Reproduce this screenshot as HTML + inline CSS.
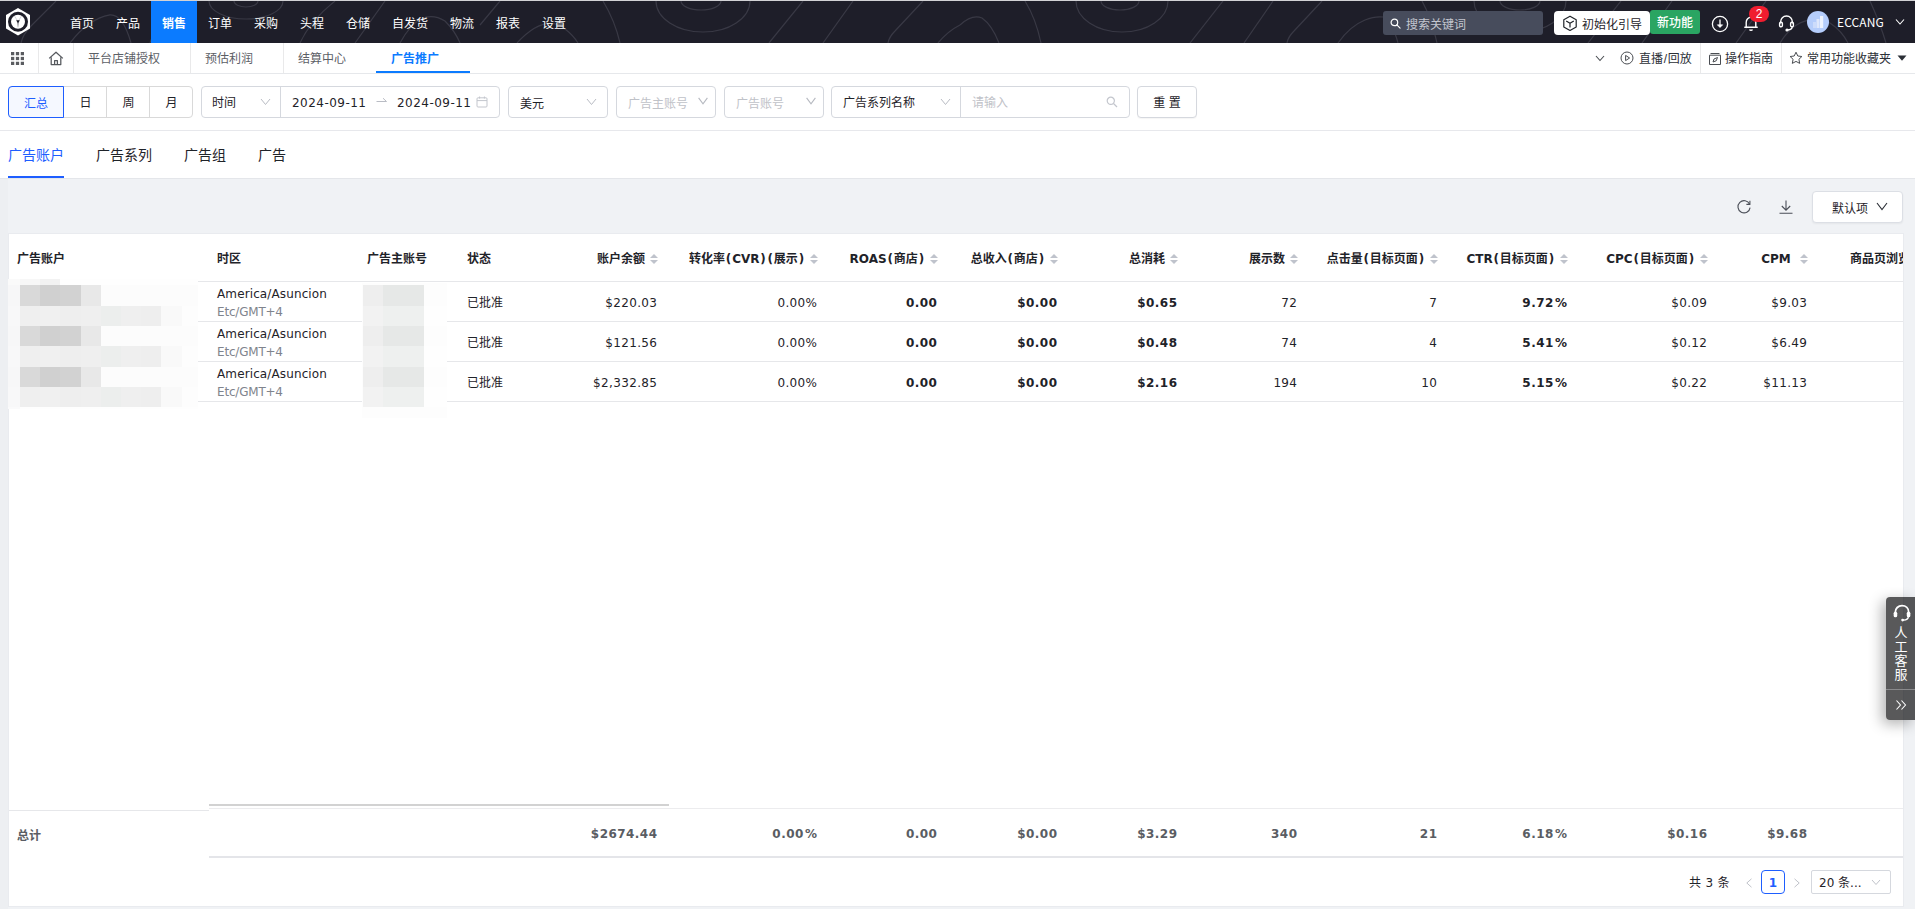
<!DOCTYPE html>
<html lang="zh-CN">
<head>
<meta charset="utf-8">
<title>广告推广</title>
<style>
*{box-sizing:border-box;margin:0;padding:0}
html,body{width:1915px;height:909px;overflow:hidden}
body{position:relative;background:#f0f2f5;font-family:"DejaVu Sans","Noto Sans CJK SC",sans-serif;font-size:12px;color:#1f2329;line-height:1}
.abs{position:absolute}
.cj{font-family:"Liberation Sans","Noto Sans CJK SC",sans-serif}
/* nav */
#nav{position:absolute;left:0;top:0;width:1915px;height:43px;background:#1e1e29;border-top:1px solid #d2d2d5;overflow:hidden}
#nav .item{position:absolute;top:0;height:42px;width:46px;text-align:center;color:#fff;font-size:12px;line-height:46px;font-family:"Liberation Sans","Noto Sans CJK SC",sans-serif;font-weight:400}
#nav .item.on{background:#0b7bff;font-weight:700}
/* tab bar */
#tabs{position:absolute;left:0;top:43px;width:1915px;height:31px;background:#fff;border-bottom:1px solid #e6e8eb}
#tabs .sep{position:absolute;top:0;width:1px;height:30px;background:#e9e9ea}
#tabs .t{position:absolute;top:0;height:30px;line-height:33px;font-size:12px;color:#5c6066;font-family:"Liberation Sans","Noto Sans CJK SC",sans-serif}
#tabs .t.on{color:#0b7bff;font-weight:700}
#tabs .r{position:absolute;top:0;height:30px;line-height:33px;font-size:12px;color:#2b2f36;font-family:"Liberation Sans","Noto Sans CJK SC",sans-serif}
/* filter */
#filter{position:absolute;left:0;top:74px;width:1915px;height:57px;background:#fff;border-bottom:1px solid #e7e8ec}
.box{position:absolute;top:12px;height:32px;border:1px solid #d5d8de;border-radius:4px;background:#fff;line-height:34px;font-size:12px;color:#1f2329}
.ph{color:#bfc2c8}
/* subtabs */
#sub{position:absolute;left:0;top:131px;width:1915px;height:48px;background:#fff;border-bottom:1px solid #e4e6ea}
#sub .s{position:absolute;top:0;height:47px;line-height:48px;font-size:14px;color:#1f2329;font-family:"Liberation Sans","Noto Sans CJK SC",sans-serif}
#sub .s.on{color:#1e5eff}
/* card */
#card{position:absolute;left:9px;top:234px;width:1894px;height:672px;background:#fff;overflow:hidden;box-shadow:0 0 0 1px #e9ebef}
.th{position:absolute;top:0;height:47px;line-height:50px;font-weight:700;font-size:12px;color:#1f2329;white-space:nowrap}
.thr{text-align:right}
.sort{display:inline-block;width:8px;height:10px;margin-left:5px;vertical-align:-1px;position:relative}
.sort:before{content:"";position:absolute;left:0;top:0;border:4px solid transparent;border-top:0;border-bottom:4.5px solid #bfc3cc}
.sort:after{content:"";position:absolute;left:0;bottom:0;border:4px solid transparent;border-bottom:0;border-top:4.5px solid #bfc3cc}
.hl{position:absolute;height:1px;background:#e6e7ea}
.td{position:absolute;height:39px;line-height:42px;font-size:12px;color:#1f2329;white-space:nowrap;text-align:right;letter-spacing:.36px;margin-right:-.36px}
.p{margin:0 .85px}
.pc{margin-left:1.2px}
.b{font-weight:700;letter-spacing:.45px;margin-right:-.45px}
.sum{position:absolute;height:40px;line-height:42px;font-size:12px;font-weight:700;color:#5a5d63;text-align:right;white-space:nowrap;letter-spacing:.45px;margin-right:-.45px}
</style>
</head>
<body>

<!-- ============ NAV ============ -->
<div id="nav">
<svg class="abs" style="left:0;top:0" width="1915" height="42" viewBox="0 0 1915 42" fill="none" stroke="#393945" stroke-width="1.2">
<path d="M56 0 L31 25 Q23 33 21 42"/>
<path d="M70 42 Q88 18 110 13.8 Q123 13 131 42"/>
<path d="M209 0 A37 18 0 0 0 283 0"/>
<path d="M234 0 A12 6 0 0 0 258 0"/>
<path d="M300 42 Q310 20 335 0"/>
<path d="M355 42 L385 0"/>
<path d="M150 42 Q160 10 185 0"/>
<path d="M400 42 Q420 5 445 20 Q455 30 460 42"/>
<path d="M480 24 L500 0"/>
<path d="M517 42 Q545 12 565 28 Q573 34 578 42"/>
<path d="M603 0 Q615 20 620 42"/>
<path d="M656 0 A47 31 0 0 0 750 0"/>
<path d="M681 0 A20 9 0 0 0 721 0"/>
<path d="M769 42 L803 0"/>
<path d="M823 42 L853 0"/>
<path d="M888 42 Q889 36 895 30 L923 0"/>
<path d="M938 42 Q948 30 960 24"/>
<path d="M960 24 Q972 13 982 17 Q992 24 999 42"/>
<path d="M1025 0 Q1036 18 1041 42"/>
<path d="M1076 0 A46 31 0 0 0 1168 0"/>
<path d="M1101 0 A19 9 0 0 0 1139 0"/>
<path d="M1190 42 L1223 0"/>
<path d="M1244 42 L1273 0"/>
<path d="M1287 42 Q1288 36 1294 30 L1322 0"/>
<path d="M1338 42 Q1350 25 1365 19 Q1375 15 1383 16"/>
<path d="M1383 16 Q1392 20 1398 42"/>
<path d="M1422 0 Q1432 18 1437 42"/>
<path d="M1474 0 A46 31 0 0 0 1566 0"/>
<path d="M1500 0 A20 9 0 0 0 1540 0"/>
<path d="M1588 42 L1621 0"/>
<path d="M1642 42 L1672 0"/>
<path d="M1736 42 L1766 0"/>
<path d="M1780 42 Q1800 10 1830 22 Q1842 30 1848 42"/>
<path d="M1870 0 Q1880 22 1886 42"/>
</svg>
<!-- logo -->
<svg class="abs" style="left:5px;top:6px" width="26" height="29" viewBox="5 7 26 29">
<path d="M18 8 L30 14.9 V28.6 L18 35.4 L6 28.6 V14.9 Z" fill="#fff"/>
<circle cx="18" cy="21.8" r="10" fill="#1e1e29"/>
<circle cx="18" cy="21.8" r="7" fill="#fff"/>
<path d="M18 21.6 L14.6 16.2 M18 21.6 L21.4 16.2" stroke="#d4d4d8" stroke-width="1" fill="none"/>
<path d="M16.2 20.3 L19.8 20.3 L18.4 23 L18.1 27.4 L17.9 27.4 L17.6 23 Z" fill="#1e1e29"/>
</svg>
<div class="item" style="left:59px">首页</div>
<div class="item" style="left:105px">产品</div>
<div class="item on" style="left:151px">销售</div>
<div class="item" style="left:197px">订单</div>
<div class="item" style="left:243px">采购</div>
<div class="item" style="left:289px">头程</div>
<div class="item" style="left:335px">仓储</div>
<div class="item" style="left:381px;width:58px">自发货</div>
<div class="item" style="left:439px">物流</div>
<div class="item" style="left:485px">报表</div>
<div class="item" style="left:531px">设置</div>
<!-- search -->
<div class="abs" style="left:1383px;top:10px;width:160px;height:24px;background:#474c5c;border-radius:3px"></div>
<svg class="abs" style="left:1390px;top:17px" width="11" height="11" viewBox="0 0 12 12" fill="none" stroke="#fff" stroke-width="1.3"><circle cx="4.8" cy="4.8" r="3.6"/><path d="M7.5 7.5 L11 11" stroke-linecap="round"/></svg>
<div class="abs cj" style="left:1406px;top:10px;height:24px;line-height:28px;color:#c3c6cf;font-size:12px">搜索关键词</div>
<!-- guide -->
<div class="abs" style="left:1554px;top:10px;width:96px;height:24px;background:#fff;border-radius:4px"></div>
<svg class="abs" style="left:1562px;top:14px" width="16" height="17" viewBox="0 0 16 17" fill="none" stroke="#1f2329" stroke-width="1.2" stroke-linejoin="round"><path d="M8 1.2 L14.2 4.7 V11.9 L8 15.4 L1.8 11.9 V4.7 Z"/><path d="M4.2 6 L8 8.3 L11.8 6 M8 8.3 V12.6"/></svg>
<div class="abs cj" style="left:1582px;top:10px;height:24px;line-height:28px;color:#1f2329;font-size:12px">初始化引导</div>
<div class="abs cj" style="left:1650px;top:9px;width:50px;height:24px;line-height:27px;background:#2aa562;border-radius:3px;color:#fff;font-size:12px;font-weight:500;text-align:center">新功能</div>
<!-- download -->
<svg class="abs" style="left:1711px;top:14px" width="18" height="18" viewBox="0 0 18 18" fill="none" stroke="#fff" stroke-width="1.3"><circle cx="9" cy="9" r="7.6"/><path d="M9 4.5 V12"/><path d="M6.3 9.8 L9 12.6 L11.7 9.8 Z" fill="#fff" stroke-width=".6"/></svg>
<!-- bell -->
<svg class="abs" style="left:1743px;top:14px" width="16" height="17" viewBox="0 0 16 17" fill="none" stroke="#fff" stroke-width="1.4" stroke-linejoin="round"><path d="M3.2 12.2 V7.4 C3.2 4.4 5.3 2.3 8 2.3 C10.7 2.3 12.8 4.4 12.8 7.4 V12.2 H14.2 H1.8 Z"/><path d="M6.6 14.5 C7 15.6 9 15.6 9.4 14.5"/></svg>
<div class="abs" style="left:1749px;top:5px;width:20px;height:16px;border-radius:8px;background:#f01d2f;color:#fff;font-size:12px;line-height:16px;text-align:center;font-family:'Liberation Sans',sans-serif">2</div>
<!-- headset -->
<svg class="abs" style="left:1778px;top:13px" width="17" height="18" viewBox="0 0 17 18" fill="none" stroke="#fff" stroke-width="1.4"><path d="M2.6 9.5 V8 C2.6 4.4 5.2 2 8.5 2 C11.8 2 14.4 4.4 14.4 8 V9.5"/><rect x="1.6" y="8.2" width="2.8" height="4.6" rx="1.3"/><rect x="12.6" y="8.2" width="2.8" height="4.6" rx="1.3"/><path d="M14.2 12.6 C14.2 15 12 16 9.6 16"/><circle cx="9" cy="16" r=".9" fill="#fff"/></svg>
<!-- avatar -->
<div class="abs" style="left:1807px;top:10px;width:22px;height:22px;border-radius:11px;background:#b5cdfb"></div>
<svg class="abs" style="left:1807px;top:10px" width="22" height="22" viewBox="0 0 22 22"><rect x="6" y="11" width="3" height="6" fill="#cddcfb"/><rect x="9.5" y="8" width="3" height="9" fill="#dfe8fc"/><rect x="13" y="5" width="3.2" height="12" fill="#eef3fd"/></svg>
<div class="abs" style="left:1837px;top:10px;height:24px;line-height:22px;color:#fff;font-size:12px;letter-spacing:.1px;font-family:'Noto Sans CJK SC','Liberation Sans',sans-serif">ECCANG</div>
<svg class="abs" style="left:1895px;top:17px" width="10" height="8" viewBox="0 0 10 8" fill="none" stroke="#fff" stroke-width="1.1"><path d="M1 1.5 L5 6 L9 1.5"/></svg>
</div>

<!-- ============ TAB BAR ============ -->
<div id="tabs">
<svg class="abs" style="left:10.5px;top:8.5px" width="13" height="13" viewBox="0 0 12 12" fill="#5a5c60"><rect x="0" y="0" width="3" height="3"/><rect x="4.5" y="0" width="3" height="3"/><rect x="9" y="0" width="3" height="3"/><rect x="0" y="4.5" width="3" height="3"/><rect x="4.5" y="4.5" width="3" height="3"/><rect x="9" y="4.5" width="3" height="3"/><rect x="0" y="9" width="3" height="3"/><rect x="4.5" y="9" width="3" height="3"/><rect x="9" y="9" width="3" height="3"/></svg>
<div class="sep" style="left:38px"></div>
<svg class="abs" style="left:48px;top:8px" width="16" height="15" viewBox="0 0 16 15" fill="none" stroke="#55585d" stroke-width="1.25" stroke-linejoin="round"><path d="M1.2 7.4 L8 1.2 L14.8 7.4"/><path d="M3.2 6.2 V13.6 H12.8 V6.2"/><path d="M6.6 13.6 V9.6 H9.4 V13.6"/></svg>
<div class="sep" style="left:73px"></div>
<div class="t" style="left:88px">平台店铺授权</div>
<div class="sep" style="left:190px"></div>
<div class="t" style="left:205px">预估利润</div>
<div class="sep" style="left:283px"></div>
<div class="t" style="left:298px">结算中心</div>
<div class="t on" style="left:391px">广告推广</div>
<div class="abs" style="left:376px;top:28px;width:94px;height:2px;background:#0b7bff"></div>
<svg class="abs" style="left:1595px;top:12px" width="10" height="7" viewBox="0 0 10 7" fill="none" stroke="#4a4d52" stroke-width="1.1"><path d="M1 1 L5 5.5 L9 1"/></svg>
<svg class="abs" style="left:1620px;top:8px" width="14" height="14" viewBox="0 0 14 14" fill="none" stroke="#4a4d52" stroke-width="1"><circle cx="7" cy="7" r="6"/><path d="M5.6 4.4 L9.6 7 L5.6 9.6 Z" stroke-linejoin="round"/></svg>
<div class="r" style="left:1639px">直播<span style="margin:0 .7px">/</span>回放</div>
<div class="sep" style="left:1700px"></div>
<svg class="abs" style="left:1708px;top:9px" width="14" height="14" viewBox="0 0 14 14" fill="none" stroke="#4a4d52" stroke-width="1"><path d="M1.5 3.2 H12.5 V12.5 H1.5 Z M2.5 1.5 H11.5"/><path d="M5 10 L6 7 L9.5 5.5 L8.2 8.8 Z"/></svg>
<div class="r" style="left:1725px">操作指南</div>
<div class="sep" style="left:1781px"></div>
<svg class="abs" style="left:1789px;top:8px" width="14" height="14" viewBox="0 0 14 14" fill="none" stroke="#4a4d52" stroke-width="1" stroke-linejoin="round"><path d="M7 1.2 L8.8 5 L12.9 5.5 L9.9 8.3 L10.7 12.4 L7 10.4 L3.3 12.4 L4.1 8.3 L1.1 5.5 L5.2 5 Z"/></svg>
<div class="r" style="left:1807px">常用功能收藏夹</div>
<svg class="abs" style="left:1897px;top:12px" width="10" height="6" viewBox="0 0 10 6" fill="#2b2f36"><path d="M0.5 0.5 H9.5 L5 5.8 Z"/></svg>
</div>

<!-- FILTER -->
<div id="filter">
<!-- segmented -->
<div class="box" style="left:8px;width:185px;border-color:#d9d9d9"></div>
<div class="abs" style="left:106px;top:13px;width:1px;height:30px;background:#d9d9d9"></div>
<div class="abs" style="left:149px;top:13px;width:1px;height:30px;background:#d9d9d9"></div>
<div class="abs cj" style="left:8px;top:12px;width:56px;height:32px;border:1px solid #1e5eff;border-radius:4px 0 0 4px;background:#f5f8ff;color:#1e5eff;line-height:35px;text-align:center;font-size:12px">汇总</div>
<div class="abs cj" style="left:64px;top:12px;width:43px;height:32px;line-height:35px;text-align:center">日</div>
<div class="abs cj" style="left:107px;top:12px;width:43px;height:32px;line-height:35px;text-align:center">周</div>
<div class="abs cj" style="left:150px;top:12px;width:43px;height:32px;line-height:35px;text-align:center">月</div>
<!-- time + range -->
<div class="box" style="left:201px;width:299px"></div>
<div class="abs" style="left:280px;top:13px;width:1px;height:30px;background:#d5d8de"></div>
<div class="abs cj" style="left:212px;top:12px;height:32px;line-height:35px">时间</div>
<svg class="abs" style="left:260px;top:24px" width="11" height="8" viewBox="0 0 11 8" fill="none" stroke="#b9bcc4" stroke-width="1"><path d="M1 1 L5.5 6.5 L10 1"/></svg>
<div class="abs" style="left:292px;top:12px;height:32px;line-height:34px;letter-spacing:.47px">2024-09-11</div>
<svg class="abs" style="left:376px;top:23px" width="12" height="6" viewBox="0 0 12 6" fill="none" stroke="#b9bcc4" stroke-width="1"><path d="M0.5 4.5 H10.5 L7 1.2"/></svg>
<div class="abs" style="left:397px;top:12px;height:32px;line-height:34px;letter-spacing:.47px">2024-09-11</div>
<svg class="abs" style="left:476px;top:22px" width="12" height="12" viewBox="0 0 12 12" fill="none" stroke="#c3c6cd" stroke-width="1"><rect x="1" y="1.8" width="10" height="9.2" rx="1"/><path d="M1 4.6 H11 M3.6 0.5 V2.6 M8.4 0.5 V2.6"/></svg>
<!-- currency -->
<div class="box cj" style="left:508px;width:100px;padding-left:11px">美元</div>
<svg class="abs" style="left:586px;top:24px" width="11" height="8" viewBox="0 0 11 8" fill="none" stroke="#b9bcc4" stroke-width="1"><path d="M1 1 L5.5 6.5 L10 1"/></svg>
<div class="box cj ph" style="left:616px;width:100px;padding-left:11px">广告主账号</div>
<svg class="abs" style="left:698px;top:23px" width="10" height="8" viewBox="0 0 10 8" fill="none" stroke="#b6b9c0" stroke-width="1.1"><path d="M0.6 0.8 L5 6.8 L9.4 0.8"/></svg>
<div class="box cj ph" style="left:724px;width:100px;padding-left:11px">广告账号</div>
<svg class="abs" style="left:806px;top:23px" width="10" height="8" viewBox="0 0 10 8" fill="none" stroke="#b6b9c0" stroke-width="1.1"><path d="M0.6 0.8 L5 6.8 L9.4 0.8"/></svg>
<div class="box" style="left:831px;width:299px"></div>
<div class="abs" style="left:960px;top:13px;width:1px;height:30px;background:#d5d8de"></div>
<div class="abs cj" style="left:843px;top:12px;height:32px;line-height:35px">广告系列名称</div>
<svg class="abs" style="left:940px;top:24px" width="11" height="8" viewBox="0 0 11 8" fill="none" stroke="#b9bcc4" stroke-width="1"><path d="M1 1 L5.5 6.5 L10 1"/></svg>
<div class="abs cj ph" style="left:972px;top:12px;height:32px;line-height:35px">请输入</div>
<svg class="abs" style="left:1106px;top:22px" width="12" height="12" viewBox="0 0 12 12" fill="none" stroke="#c3c6cd" stroke-width="1.2"><circle cx="4.8" cy="4.8" r="3.6"/><path d="M7.5 7.5 L11 11"/></svg>
<div class="box cj" style="left:1137px;width:60px;text-align:center;line-height:32px;box-shadow:0 1px 1px rgba(0,0,0,.04)">重 置</div>
</div>
<!-- SUBTABS -->
<div id="sub">
<div class="s on" style="left:8px">广告账户</div>
<div class="s" style="left:96px">广告系列</div>
<div class="s" style="left:184px">广告组</div>
<div class="s" style="left:258px">广告</div>
<div class="abs" style="left:8px;top:45px;width:56px;height:2px;background:#1e5eff"></div>
</div>
<div class="abs" style="left:0;top:179px;width:8px;height:730px;background:#edeff2"></div>
<!-- TOOLBAR -->
<div id="tool">
<svg class="abs" style="left:1736px;top:199px" width="16" height="16" viewBox="0 0 16 16" fill="none" stroke="#4a4e57" stroke-width="1.1"><path d="M13.6 5.2 A6.1 6.1 0 1 0 14.1 8.6"/><path d="M13.9 1.8 V5.4 H10.4" stroke-linejoin="round"/></svg>
<svg class="abs" style="left:1778px;top:199px" width="16" height="16" viewBox="0 0 16 16" fill="none" stroke="#4a4e57" stroke-width="1.1"><path d="M8 1.5 V11 M3.8 7 L8 11.2 L12.2 7 M1.5 14.3 H14.5"/></svg>
<div class="abs cj" style="left:1812px;top:191px;width:91px;height:32px;border:1px solid #dcdfe5;border-radius:4px;background:#fff;line-height:34px;padding-left:19px;box-shadow:0 1px 2px rgba(0,0,0,.05)">默认项</div>
<svg class="abs" style="left:1876px;top:202px" width="12" height="9" viewBox="0 0 12 9" fill="none" stroke="#2b2f36" stroke-width="1.1"><path d="M1 1 L6 7.5 L11 1"/></svg>
</div>
<!-- CARD -->
<div id="card">
<div class="th" style="left:8px">广告账户</div>
<div class="th" style="left:208px">时区</div>
<div class="th" style="left:358px">广告主账号</div>
<div class="th" style="left:458px">状态</div>
<div class="th thr" style="right:1245px">账户余额<span class="sort"></span></div>
<div class="th thr" style="right:1085px">转化率<span class="p">(</span>CVR<span class="p">)</span><span class="p">(</span>展示<span class="p">)</span><span class="sort"></span></div>
<div class="th thr" style="right:965px">ROAS<span class="p">(</span>商店<span class="p">)</span><span class="sort"></span></div>
<div class="th thr" style="right:845px">总收入<span class="p">(</span>商店<span class="p">)</span><span class="sort"></span></div>
<div class="th thr" style="right:725px">总消耗<span class="sort"></span></div>
<div class="th thr" style="right:605px">展示数<span class="sort"></span></div>
<div class="th thr" style="right:465px">点击量<span class="p">(</span>目标页面<span class="p">)</span><span class="sort"></span></div>
<div class="th thr" style="right:335px">CTR<span class="p">(</span>目标页面<span class="p">)</span><span class="sort"></span></div>
<div class="th thr" style="right:195px">CPC<span class="p">(</span>目标页面<span class="p">)</span><span class="sort"></span></div>
<div class="th thr" style="right:95px">CPM&nbsp;<span class="sort"></span></div>
<div class="th" style="left:1841px">商品页浏览</div>
<div class="hl" style="left:0;top:47px;width:1894px"></div>
<div class="hl" style="left:0;top:87px;width:1894px"></div>
<div class="abs" style="left:208px;top:52px;line-height:16px;font-size:12px;color:#1f2329;white-space:nowrap;letter-spacing:.12px">America/Asuncion</div>
<div class="abs" style="left:208px;top:70px;line-height:16px;font-size:12px;color:#80848d;white-space:nowrap;letter-spacing:-.2px">Etc/GMT+4</div>
<div class="td cj" style="letter-spacing:0;left:458px;top:48px;text-align:left">已批准</div>
<div class="td" style="right:1246px;top:48px">$220.03</div>
<div class="td" style="right:1086px;top:48px">0.00%</div>
<div class="td b" style="right:966px;top:48px">0.00</div>
<div class="td b" style="right:846px;top:48px">$0.00</div>
<div class="td b" style="right:726px;top:48px">$0.65</div>
<div class="td" style="right:606px;top:48px">72</div>
<div class="td" style="right:466px;top:48px">7</div>
<div class="td b" style="right:336px;top:48px">9.72<span class="pc">%</span></div>
<div class="td" style="right:196px;top:48px">$0.09</div>
<div class="td" style="right:96px;top:48px">$9.03</div>
<div class="hl" style="left:0;top:127px;width:1894px"></div>
<div class="abs" style="left:208px;top:92px;line-height:16px;font-size:12px;color:#1f2329;white-space:nowrap;letter-spacing:.12px">America/Asuncion</div>
<div class="abs" style="left:208px;top:110px;line-height:16px;font-size:12px;color:#80848d;white-space:nowrap;letter-spacing:-.2px">Etc/GMT+4</div>
<div class="td cj" style="letter-spacing:0;left:458px;top:88px;text-align:left">已批准</div>
<div class="td" style="right:1246px;top:88px">$121.56</div>
<div class="td" style="right:1086px;top:88px">0.00%</div>
<div class="td b" style="right:966px;top:88px">0.00</div>
<div class="td b" style="right:846px;top:88px">$0.00</div>
<div class="td b" style="right:726px;top:88px">$0.48</div>
<div class="td" style="right:606px;top:88px">74</div>
<div class="td" style="right:466px;top:88px">4</div>
<div class="td b" style="right:336px;top:88px">5.41<span class="pc">%</span></div>
<div class="td" style="right:196px;top:88px">$0.12</div>
<div class="td" style="right:96px;top:88px">$6.49</div>
<div class="hl" style="left:0;top:167px;width:1894px"></div>
<div class="abs" style="left:208px;top:132px;line-height:16px;font-size:12px;color:#1f2329;white-space:nowrap;letter-spacing:.12px">America/Asuncion</div>
<div class="abs" style="left:208px;top:150px;line-height:16px;font-size:12px;color:#80848d;white-space:nowrap;letter-spacing:-.2px">Etc/GMT+4</div>
<div class="td cj" style="letter-spacing:0;left:458px;top:128px;text-align:left">已批准</div>
<div class="td" style="right:1246px;top:128px">$2,332.85</div>
<div class="td" style="right:1086px;top:128px">0.00%</div>
<div class="td b" style="right:966px;top:128px">0.00</div>
<div class="td b" style="right:846px;top:128px">$0.00</div>
<div class="td b" style="right:726px;top:128px">$2.16</div>
<div class="td" style="right:606px;top:128px">194</div>
<div class="td" style="right:466px;top:128px">10</div>
<div class="td b" style="right:336px;top:128px">5.15<span class="pc">%</span></div>
<div class="td" style="right:196px;top:128px">$0.22</div>
<div class="td" style="right:96px;top:128px">$11.13</div>
<div class="abs" style="left:0px;top:576px;width:200px;height:1px;background:#e6e7ea"></div>
<div class="abs" style="left:200px;top:570px;width:460px;height:2px;background:#d2d2d2"></div>
<div class="abs" style="left:200px;top:574px;width:1694px;height:1px;background:#ececee"></div>
<div class="abs" style="left:200px;top:622px;width:1694px;height:2px;background:#e4e5e9"></div>
<div class="abs cj" style="left:8px;top:582px;height:40px;line-height:40px;font-weight:700;color:#5a5d63;font-size:12px">总计</div>
<div class="sum" style="right:1246px;top:579px">$2674.44</div>
<div class="sum" style="right:1086px;top:579px">0.00<span class="pc">%</span></div>
<div class="sum" style="right:966px;top:579px">0.00</div>
<div class="sum" style="right:846px;top:579px">$0.00</div>
<div class="sum" style="right:726px;top:579px">$3.29</div>
<div class="sum" style="right:606px;top:579px">340</div>
<div class="sum" style="right:466px;top:579px">21</div>
<div class="sum" style="right:336px;top:579px">6.18<span class="pc">%</span></div>
<div class="sum" style="right:196px;top:579px">$0.16</div>
<div class="sum" style="right:96px;top:579px">$9.68</div>
<div class="abs" style="left:1680px;top:636px;height:24px;line-height:26px;font-size:12px;color:#1f2329;white-space:nowrap;letter-spacing:.3px">共 3 条</div>
<svg class="abs" style="left:1736px;top:643px" width="8" height="11" viewBox="0 0 8 11" fill="none" stroke="#c0c3ca" stroke-width="1"><path d="M6.5 1.8 L1.8 6 L6.5 10.2"/></svg>
<div class="abs" style="left:1752px;top:636px;width:24px;height:24px;border:1px solid #1e5eff;border-radius:4px;line-height:24px;text-align:center;color:#1e5eff;font-weight:700;font-size:12px">1</div>
<svg class="abs" style="left:1784px;top:643px" width="8" height="11" viewBox="0 0 8 11" fill="none" stroke="#c0c3ca" stroke-width="1"><path d="M1.5 1.8 L6.2 6 L1.5 10.2"/></svg>
<div class="abs" style="left:1802px;top:636px;width:80px;height:24px;border:1px solid #d5d8de;border-radius:2px;line-height:24px;padding-left:7px;font-size:12px;color:#1f2329;white-space:nowrap">20 条...</div>
<svg class="abs" style="left:1862px;top:645px" width="10" height="7" viewBox="0 0 10 7" fill="none" stroke="#c0c3ca" stroke-width="1"><path d="M1 1 L5 5.5 L9 1"/></svg>
</div>
<div id="mosaic">
<div class="abs" style="left:8.00px;top:279.00px;width:190.00px;height:130.00px;background:#fefefe"></div>
<div class="abs" style="left:8.00px;top:279.00px;width:12.00px;height:6.20px;background:#fafafa"></div>
<div class="abs" style="left:20.00px;top:279.00px;width:20.20px;height:6.20px;background:#f7f7f7"></div>
<div class="abs" style="left:40.20px;top:279.00px;width:20.20px;height:6.20px;background:#f2f2f2"></div>
<div class="abs" style="left:8.00px;top:285.16px;width:12.00px;height:20.39px;background:#f7f7f8"></div>
<div class="abs" style="left:20.00px;top:285.16px;width:20.25px;height:20.39px;background:#d9d9d9"></div>
<div class="abs" style="left:40.20px;top:285.16px;width:20.25px;height:20.39px;background:#d0d0d0"></div>
<div class="abs" style="left:60.40px;top:285.16px;width:20.25px;height:20.39px;background:#d2d2d2"></div>
<div class="abs" style="left:80.60px;top:285.16px;width:20.25px;height:20.39px;background:#e8e8e8"></div>
<div class="abs" style="left:100.80px;top:285.16px;width:97.20px;height:20.39px;background:#fcfcfc"></div>
<div class="abs" style="left:8.00px;top:305.50px;width:12.00px;height:20.39px;background:#f8f8f9"></div>
<div class="abs" style="left:20.00px;top:305.50px;width:20.25px;height:20.39px;background:#efefef"></div>
<div class="abs" style="left:40.20px;top:305.50px;width:20.25px;height:20.39px;background:#f0f0f0"></div>
<div class="abs" style="left:60.40px;top:305.50px;width:20.25px;height:20.39px;background:#eeeeee"></div>
<div class="abs" style="left:80.60px;top:305.50px;width:20.25px;height:20.39px;background:#efefef"></div>
<div class="abs" style="left:100.80px;top:305.50px;width:20.25px;height:20.39px;background:#eceeed"></div>
<div class="abs" style="left:121.00px;top:305.50px;width:20.25px;height:20.39px;background:#efefef"></div>
<div class="abs" style="left:141.20px;top:305.50px;width:20.25px;height:20.39px;background:#eeeeee"></div>
<div class="abs" style="left:161.40px;top:305.50px;width:20.25px;height:20.39px;background:#f9f9f9"></div>
<div class="abs" style="left:181.60px;top:305.50px;width:16.40px;height:20.39px;background:#fdfdfd"></div>
<div class="abs" style="left:8.00px;top:325.84px;width:12.00px;height:20.39px;background:#f7f7f8"></div>
<div class="abs" style="left:20.00px;top:325.84px;width:20.25px;height:20.39px;background:#d9d9d9"></div>
<div class="abs" style="left:40.20px;top:325.84px;width:20.25px;height:20.39px;background:#d0d0d0"></div>
<div class="abs" style="left:60.40px;top:325.84px;width:20.25px;height:20.39px;background:#d2d2d2"></div>
<div class="abs" style="left:80.60px;top:325.84px;width:20.25px;height:20.39px;background:#e8e8e8"></div>
<div class="abs" style="left:100.80px;top:325.84px;width:97.20px;height:20.39px;background:#fcfcfc"></div>
<div class="abs" style="left:8.00px;top:346.18px;width:12.00px;height:20.39px;background:#f8f8f9"></div>
<div class="abs" style="left:20.00px;top:346.18px;width:20.25px;height:20.39px;background:#efefef"></div>
<div class="abs" style="left:40.20px;top:346.18px;width:20.25px;height:20.39px;background:#f0f0f0"></div>
<div class="abs" style="left:60.40px;top:346.18px;width:20.25px;height:20.39px;background:#eeeeee"></div>
<div class="abs" style="left:80.60px;top:346.18px;width:20.25px;height:20.39px;background:#efefef"></div>
<div class="abs" style="left:100.80px;top:346.18px;width:20.25px;height:20.39px;background:#eceeed"></div>
<div class="abs" style="left:121.00px;top:346.18px;width:20.25px;height:20.39px;background:#efefef"></div>
<div class="abs" style="left:141.20px;top:346.18px;width:20.25px;height:20.39px;background:#eeeeee"></div>
<div class="abs" style="left:161.40px;top:346.18px;width:20.25px;height:20.39px;background:#f9f9f9"></div>
<div class="abs" style="left:181.60px;top:346.18px;width:16.40px;height:20.39px;background:#fdfdfd"></div>
<div class="abs" style="left:8.00px;top:366.52px;width:12.00px;height:20.39px;background:#f7f7f8"></div>
<div class="abs" style="left:20.00px;top:366.52px;width:20.25px;height:20.39px;background:#d9d9d9"></div>
<div class="abs" style="left:40.20px;top:366.52px;width:20.25px;height:20.39px;background:#d0d0d0"></div>
<div class="abs" style="left:60.40px;top:366.52px;width:20.25px;height:20.39px;background:#d2d2d2"></div>
<div class="abs" style="left:80.60px;top:366.52px;width:20.25px;height:20.39px;background:#e8e8e8"></div>
<div class="abs" style="left:100.80px;top:366.52px;width:97.20px;height:20.39px;background:#fcfcfc"></div>
<div class="abs" style="left:8.00px;top:386.86px;width:12.00px;height:20.39px;background:#f8f8f9"></div>
<div class="abs" style="left:20.00px;top:386.86px;width:20.25px;height:20.39px;background:#efefef"></div>
<div class="abs" style="left:40.20px;top:386.86px;width:20.25px;height:20.39px;background:#f0f0f0"></div>
<div class="abs" style="left:60.40px;top:386.86px;width:20.25px;height:20.39px;background:#eeeeee"></div>
<div class="abs" style="left:80.60px;top:386.86px;width:20.25px;height:20.39px;background:#efefef"></div>
<div class="abs" style="left:100.80px;top:386.86px;width:20.25px;height:20.39px;background:#eceeed"></div>
<div class="abs" style="left:121.00px;top:386.86px;width:20.25px;height:20.39px;background:#efefef"></div>
<div class="abs" style="left:141.20px;top:386.86px;width:20.25px;height:20.39px;background:#eeeeee"></div>
<div class="abs" style="left:161.40px;top:386.86px;width:20.25px;height:20.39px;background:#f9f9f9"></div>
<div class="abs" style="left:181.60px;top:386.86px;width:16.40px;height:20.39px;background:#fdfdfd"></div>
<div class="abs" style="left:8.00px;top:407.20px;width:12.00px;height:2.00px;background:#fafafb"></div>
<div class="abs" style="left:362.00px;top:283.00px;width:85.00px;height:135.00px;background:#fdfdfd"></div>
<div class="abs" style="left:363.00px;top:285.16px;width:20.25px;height:20.39px;background:#eeeeee"></div>
<div class="abs" style="left:383.20px;top:285.16px;width:40.45px;height:20.39px;background:#e6e8e7"></div>
<div class="abs" style="left:423.60px;top:285.16px;width:23.40px;height:20.39px;background:#fdfdfd"></div>
<div class="abs" style="left:363.00px;top:305.50px;width:20.25px;height:20.39px;background:#f2f2f2"></div>
<div class="abs" style="left:383.20px;top:305.50px;width:40.45px;height:20.39px;background:#eef0ef"></div>
<div class="abs" style="left:423.60px;top:305.50px;width:23.40px;height:20.39px;background:#fefefe"></div>
<div class="abs" style="left:363.00px;top:325.84px;width:20.25px;height:20.39px;background:#eeeeee"></div>
<div class="abs" style="left:383.20px;top:325.84px;width:40.45px;height:20.39px;background:#e6e8e7"></div>
<div class="abs" style="left:423.60px;top:325.84px;width:23.40px;height:20.39px;background:#fdfdfd"></div>
<div class="abs" style="left:363.00px;top:346.18px;width:20.25px;height:20.39px;background:#f2f2f2"></div>
<div class="abs" style="left:383.20px;top:346.18px;width:40.45px;height:20.39px;background:#eef0ef"></div>
<div class="abs" style="left:423.60px;top:346.18px;width:23.40px;height:20.39px;background:#fefefe"></div>
<div class="abs" style="left:363.00px;top:366.52px;width:20.25px;height:20.39px;background:#eeeeee"></div>
<div class="abs" style="left:383.20px;top:366.52px;width:40.45px;height:20.39px;background:#e6e8e7"></div>
<div class="abs" style="left:423.60px;top:366.52px;width:23.40px;height:20.39px;background:#fdfdfd"></div>
<div class="abs" style="left:363.00px;top:386.86px;width:20.25px;height:20.39px;background:#f2f2f2"></div>
<div class="abs" style="left:383.20px;top:386.86px;width:40.45px;height:20.39px;background:#eef0ef"></div>
<div class="abs" style="left:423.60px;top:386.86px;width:23.40px;height:20.39px;background:#fefefe"></div>
</div>
<!-- FLOAT -->
<div id="float">
<div class="abs" style="left:1886px;top:597px;width:29px;height:123px;background:rgba(0,0,2,.65);border-radius:4px 0 0 4px;box-shadow:-4px 4px 14px rgba(0,0,0,.3)"></div>
<div class="abs" style="left:1886px;top:689px;width:29px;height:1px;background:#8a8a8c"></div>
<svg class="abs" style="left:1892px;top:603px" width="20" height="20" viewBox="0 0 18 18" fill="none" stroke="#fff" stroke-width="1.6"><path d="M3 10 V8.4 C3 4.8 5.6 2.4 9 2.4 C12.4 2.4 15 4.8 15 8.4 V10"/><rect x="1.5" y="7.8" width="3.2" height="5" rx="1.4" fill="#fff" stroke="none"/><rect x="13.3" y="7.8" width="3.2" height="5" rx="1.4" fill="#fff" stroke="none"/><path d="M14.8 12 C14.6 14.4 12.6 15.4 10.4 15.4" stroke-width="1.2"/><circle cx="9.6" cy="15.4" r="1.3" fill="#fff" stroke="none"/></svg>
<div class="abs cj" style="left:1894px;top:626px;width:14px;font-size:13px;line-height:14px;color:#fff;text-align:center">人<br>工<br>客<br>服</div>
<svg class="abs" style="left:1895px;top:699px" width="12" height="12" viewBox="0 0 12 12" fill="none" stroke="#fff" stroke-width="1.1"><path d="M1.5 1.5 L5.5 6 L1.5 10.5 M6.5 1.5 L10.5 6 L6.5 10.5"/></svg>
</div>

</body>
</html>
